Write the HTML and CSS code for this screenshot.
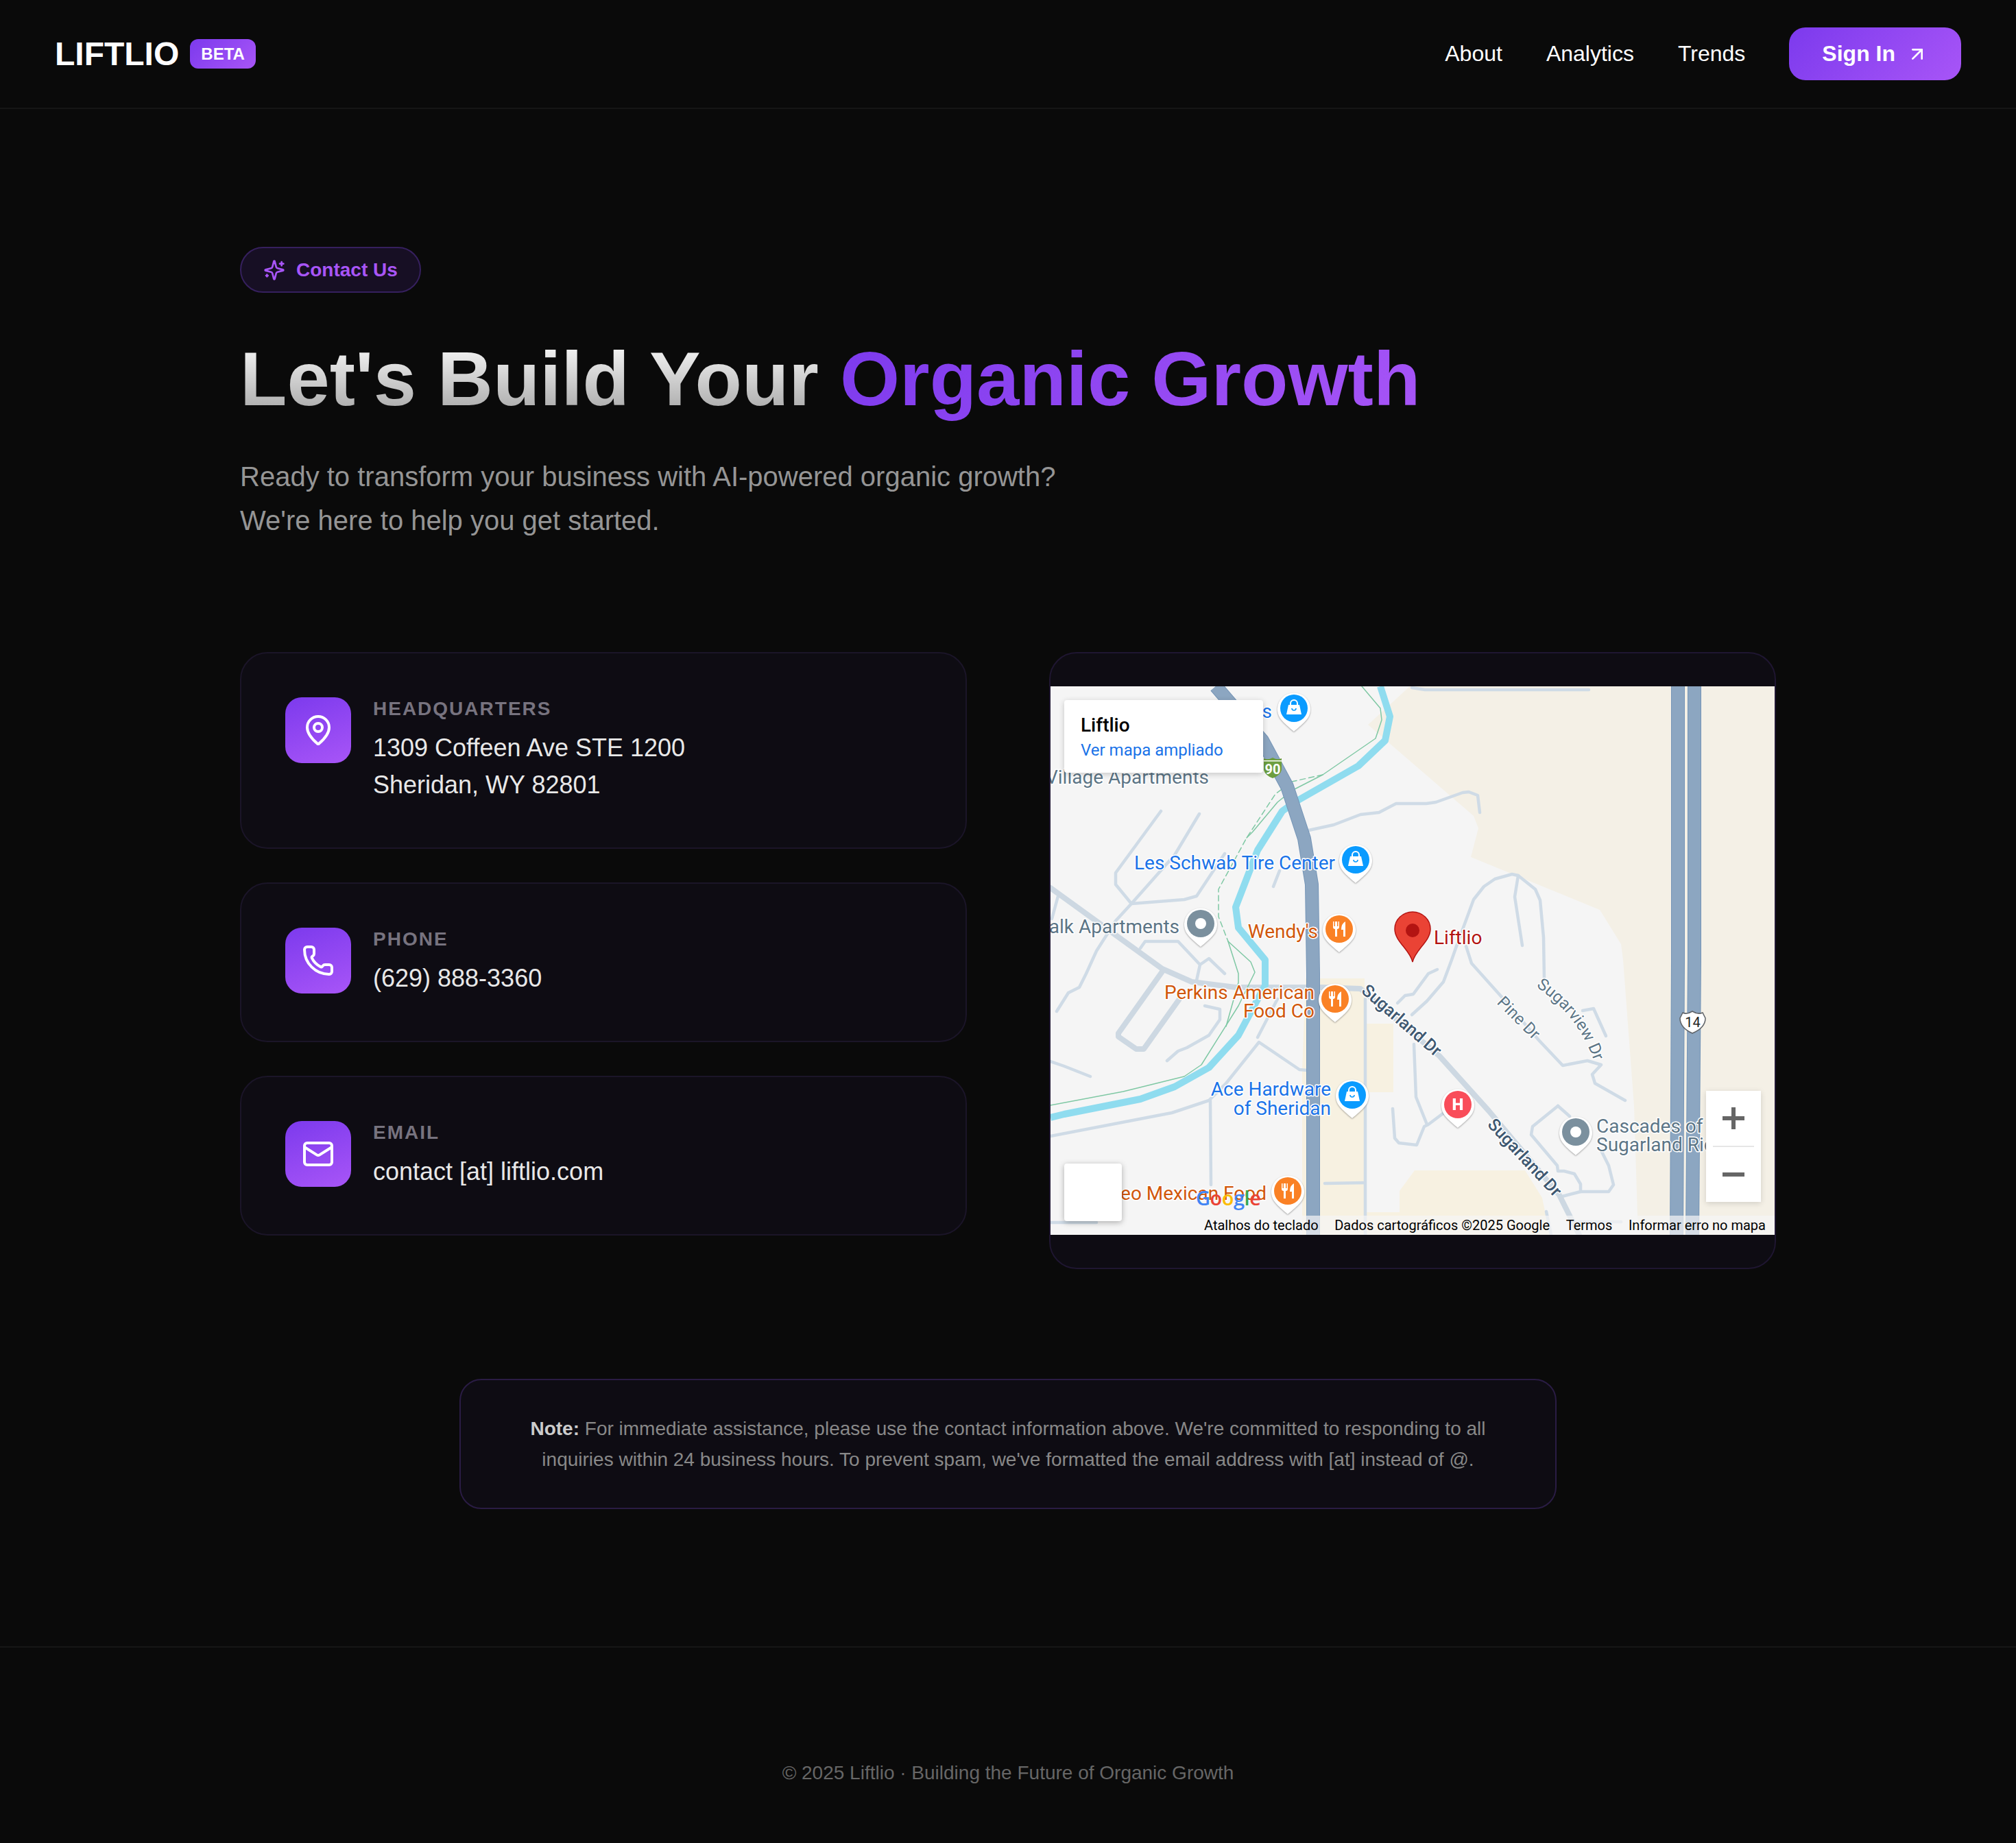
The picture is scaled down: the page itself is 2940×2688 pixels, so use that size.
FILE: index.html
```html
<!DOCTYPE html>
<html lang="en">
<head>
<meta charset="utf-8">
<title>Contact Us - Liftlio</title>
<link rel="stylesheet" href="styles.css">
</head>
<body>
<header class="site-header">
  <div class="brand">
    <span class="logo">LIFTLIO</span>
    <span class="beta">BETA</span>
  </div>
  <nav class="nav">
    <a class="nav-link">About</a>
    <a class="nav-link">Analytics</a>
    <a class="nav-link">Trends</a>
    <a class="sign-in">Sign In
      <svg class="icon-32" viewBox="0 0 24 24" fill="none" stroke="currentColor" stroke-width="2" stroke-linecap="round" stroke-linejoin="round"><path d="M7 7h10v10"/><path d="M7 17 17 7"/></svg>
    </a>
  </nav>
</header>

<main class="container">
  <section class="hero">
    <div class="pill">
      <svg class="icon-32" viewBox="0 0 24 24" fill="none" stroke="currentColor" stroke-width="2" stroke-linecap="round" stroke-linejoin="round"><path d="M9.937 15.5A2 2 0 0 0 8.5 14.063l-6.135-1.582a.5.5 0 0 1 0-.962L8.5 9.936A2 2 0 0 0 9.937 8.5l1.582-6.135a.5.5 0 0 1 .963 0L14.063 8.5A2 2 0 0 0 15.5 9.937l6.135 1.581a.5.5 0 0 1 0 .964L15.5 14.063a2 2 0 0 0-1.437 1.437l-1.582 6.135a.5.5 0 0 1-.963 0z"/><path d="M20 3v4"/><path d="M22 5h-4"/><path d="M4 17v2"/><path d="M5 18H3"/></svg>
      <span>Contact Us</span>
    </div>
    <h1 class="title"><span class="title-light">Let's Build Your </span><span class="title-accent">Organic Growth</span></h1>
    <p class="lead">Ready to transform your business with AI-powered organic growth?<br>We're here to help you get started.</p>
  </section>

  <section class="contact-grid">
    <div class="info-column">
      <article class="card">
        <div class="card-icon"><svg class="icon-48" viewBox="0 0 24 24" fill="none" stroke="currentColor" stroke-width="2" stroke-linecap="round" stroke-linejoin="round"><path d="M20 10c0 4.993-5.539 10.193-7.399 11.799a1 1 0 0 1-1.202 0C9.539 20.193 4 14.993 4 10a8 8 0 0 1 16 0"/><circle cx="12" cy="10" r="3"/></svg></div>
        <div class="card-body">
          <div class="card-label">HEADQUARTERS</div>
          <div class="card-value">1309 Coffeen Ave STE 1200<br>Sheridan, WY 82801</div>
        </div>
      </article>
      <article class="card">
        <div class="card-icon"><svg class="icon-48" viewBox="0 0 24 24" fill="none" stroke="currentColor" stroke-width="2" stroke-linecap="round" stroke-linejoin="round"><path d="M13.832 16.568a1 1 0 0 0 1.213-.303l.355-.465A2 2 0 0 1 17 15h3a2 2 0 0 1 2 2v3a2 2 0 0 1-2 2A18 18 0 0 1 2 4a2 2 0 0 1 2-2h3a2 2 0 0 1 2 2v3a2 2 0 0 1-.8 1.6l-.468.351a1 1 0 0 0-.292 1.233 14 14 0 0 0 6.392 6.384"/></svg></div>
        <div class="card-body">
          <div class="card-label">PHONE</div>
          <div class="card-value">(629) 888-3360</div>
        </div>
      </article>
      <article class="card">
        <div class="card-icon"><svg class="icon-48" viewBox="0 0 24 24" fill="none" stroke="currentColor" stroke-width="2" stroke-linecap="round" stroke-linejoin="round"><rect width="20" height="16" x="2" y="4" rx="2"/><path d="m22 7-8.97 5.7a1.94 1.94 0 0 1-2.06 0L2 7"/></svg></div>
        <div class="card-body">
          <div class="card-label">EMAIL</div>
          <div class="card-value">contact [at] liftlio.com</div>
        </div>
      </article>
    </div>

    <div class="map-card">
      <div class="map">
        <svg class="map-canvas" viewBox="0 0 1056 800" xmlns="http://www.w3.org/2000/svg">
          <defs>
            <g id="pin-shape">
              <path d="M0 34 C-3 31 -18 20 -22 11 A24 24 0 1 1 22 11 C18 20 3 31 0 34 Z" fill="#fff"/>
            </g>
            <g id="bag">
              <path d="M-11 9 L-8 -5 H8 L11 9 Z" fill="#fff"/>
              <path d="M-5 -5 V-7 A5 5 0 0 1 5 -7 V-5" fill="none" stroke="#fff" stroke-width="2"/>
              <path d="M-3 0 A3 3 0 0 0 3 0" fill="none" stroke="#0a9bff" stroke-width="1.6"/>
            </g>
            <g id="fork">
              <path d="M-9 -11 V-3 Q-9 0 -6 0 V11 H-3 V0 Q0 0 0 -3 V-11 H-1.5 V-4 H-3 V-11 H-6 V-4 H-7.5 V-11 Z" fill="#fff"/>
              <path d="M9 -11 Q3 -8 3 1 H6 V11 H9 Z" fill="#fff"/>
            </g>
            <path id="sugarview-path" d="M708 438 C740 460 775 492 796 556"/>
          </defs>

          <rect width="1056" height="800" fill="#f5f5f5"/>
          <path class="land" d="M524 0H1056V800H860L856 772 851 612 835 399 832 376 801 326 613 249 624 207 617 189 463 56Z"/>
          <path class="mall" d="M372 426H458V492H500V592H459V800H367V560Z"/>
          <path class="mall" d="M531 706H692L717 746 728 800H367V767H509V736Z"/>

          <g class="road">
            <path d="M161 182 95 272V289L118 317 195 311 213 306 254 244"/>
            <path d="M217 186 181 246 118 317 95 342 67 386 52 419 42 439 26 447 9 474"/>
            <path d="M11 306 2 339"/>
            <path d="M131 382 138 372H186L218 406 231 397 254 419M218 406 213 429"/>
            <path d="M372 211 413 202 452 187 479 184 504 171H548L562 169 601 155 610 154 623 159 626 184"/>
            <path d="M527 2 546 5H785"/>
            <path d="M334 269 325 292"/>
            <path d="M225 466 247 471V486L231 509 199 527 186 532 170 546"/>
            <path d="M0 547 20 554 58 569"/>
            <path d="M302 512 331 456"/>
            <path d="M0 656 177 622 231 604 256 579 304 519 363 559 374 560"/>
            <path d="M233 604 234 727"/>
            <path d="M459 456V800"/>
            <path d="M400 725 458 724"/>
            <path d="M0 782H67"/>
            <path d="M499 616 502 659 508 666 534 669 545 642 551 639 571 624 594 610"/>
            <path d="M530 522 533 599 549 639"/>
            <path d="M506 462 517 451 529 449 551 419 564 413"/>
            <path d="M592 379 585 399 573 431 549 459 527 479"/>
            <path d="M592 379 617 311 632 292 648 281 673 274 682 276 707 296 714 312 719 366 720 426"/>
            <path d="M682 276 677 307 688 378"/>
            <path d="M606 379 614 404 657 452 712 516 747 553 783 546 803 552 790 566 794 579 838 604"/>
            <path d="M776 473 792 470 810 510"/>
            <path d="M740 612 703 642 701 654 739 699 740 707H749L764 711 773 726V737H814L821 727 814 699 803 677"/>
            <path d="M740 612 757 627"/>
            <path d="M746 744 773 737"/>
            <path d="M723 766 730 800"/>
            <path d="M760 781H832"/>
          </g>
          <g class="road road-wide">
            <path d="M0 294 163 412 206 431 270 439H395L452 441 567 539 639 619 742 742 771 800"/>
            <path d="M163 416 99 506V511L125 529H136L188 456"/>
          </g>

          <path class="stream" d="M481 0 495 44 488 79 449 116 356 169 338 182 302 239 270 322 274 352 313 399V436L274 509 231 556 181 584 131 602 20 624 0 629"/>
          <path class="trail" d="M454 0 481 32 483 49 474 76 397 129 352 152 331 169 295 212 286 221"/>
          <path class="trail trail-dash" d="M397 129 352 139 328 157 286 221 245 296V336L259 372"/>
          <path class="trail" d="M259 372 292 402 298 417 274 466 220 552 195 569 106 591 0 611"/>
          <path class="trail" d="M259 372 274 419V432L256 496"/>

          <g class="highway-edge">
            <path d="M241 0 309 79 345 146 370 222 381 289 383 419V800"/>
            <path d="M915 0V400L913 800"/>
            <path d="M939 0V400L936 800"/>
          </g>
          <g class="highway">
            <path d="M241 0 309 79 345 146 370 222 381 289 383 419V800"/>
            <path d="M915 0V400L913 800"/>
            <path d="M939 0V400L936 800"/>
          </g>

          <g transform="translate(311 104)">
            <path d="M0 1 Q6 4 13 0 Q20 4 26 1 V18 Q24 26 13 30 Q2 26 0 18 Z" fill="#6d9e3f"/>
            <rect x="0" y="4" width="26" height="1.500" fill="#fff"/>
            <text class="shield-green" x="13" y="24">90</text>
          </g>
          <g transform="translate(918 474)">
            <path d="M4 2 Q10 5 18 0 Q26 5 33 2 L37 10 Q37 24 18 32 Q0 24 0 10 Z" fill="#fff" stroke="#5f6368" stroke-width="1.5"/>
            <text class="shield-white" x="18.500" y="23">14</text>
          </g>

          <g class="label">
            <text class="lb-blue" x="323" y="46" text-anchor="end">s</text>
            <text class="lb-grey" x="231" y="142" text-anchor="end">Village Apartments</text>
            <text class="lb-blue" x="415" y="267" text-anchor="end">Les Schwab Tire Center</text>
            <text class="lb-grey" x="188" y="360" text-anchor="end">alk Apartments</text>
            <text class="lb-orange" x="390" y="367" text-anchor="end">Wendy's</text>
            <text class="lb-orange" x="385" y="456" text-anchor="end">Perkins American</text>
            <text class="lb-orange" x="385" y="483" text-anchor="end">Food Co</text>
            <text class="lb-blue" x="409" y="597" text-anchor="end">Ace Hardware</text>
            <text class="lb-blue" x="409" y="625" text-anchor="end">of Sheridan</text>
            <text class="lb-orange" x="315" y="749" text-anchor="end">eo Mexican Food</text>
            <text class="lb-grey" x="796" y="651">Cascades of</text>
            <text class="lb-grey" x="796" y="678">Sugarland Ridge</text>
            <text class="lb-red" x="559" y="376">Liftlio</text>
            <text class="lb-street" transform="translate(452 446) rotate(41)">Sugarland Dr</text>
            <text class="lb-street" transform="translate(636 640) rotate(47)">Sugarland Dr</text>
            <text class="lb-lane" transform="translate(650 462) rotate(45)">Pine Dr</text>
            <text class="lb-lane"><textPath href="#sugarview-path">Sugarview Dr</textPath></text>
          </g>

          <g class="pin" transform="translate(355 32)"><use href="#pin-shape"/><circle r="20" fill="#0a9bff"/><use href="#bag"/></g>
          <g class="pin" transform="translate(445 253)"><use href="#pin-shape"/><circle r="20" fill="#0a9bff"/><use href="#bag"/></g>
          <g class="pin" transform="translate(440 596)"><use href="#pin-shape"/><circle r="20" fill="#0a9bff"/><use href="#bag"/></g>
          <g class="pin" transform="translate(219 346)"><use href="#pin-shape"/><circle r="20" fill="#7b909e"/><circle r="8" fill="#fff"/></g>
          <g class="pin" transform="translate(766 650)"><use href="#pin-shape"/><circle r="20" fill="#7b909e"/><circle r="8" fill="#fff"/></g>
          <g class="pin" transform="translate(421 354)"><use href="#pin-shape"/><circle r="20" fill="#fa8125"/><use href="#fork"/></g>
          <g class="pin" transform="translate(415 456)"><use href="#pin-shape"/><circle r="20" fill="#fa8125"/><use href="#fork"/></g>
          <g class="pin" transform="translate(346 736)"><use href="#pin-shape"/><circle r="20" fill="#fa8125"/><use href="#fork"/></g>
          <g class="pin" transform="translate(594 610)"><use href="#pin-shape"/><circle r="20" fill="#f94d5a"/><text class="hospital" y="8">H</text></g>

          <path d="M528 402 C524 384 502 372 502 354 A26 25 0 0 1 554 354 C554 372 532 384 528 402Z" fill="#ea4335" stroke="#b31412" stroke-width="1.500"/>
          <circle cx="528" cy="356" r="10" fill="#b31412"/>

          <text class="google" x="212" y="757"><tspan fill="#4285f4">G</tspan><tspan fill="#ea4335">o</tspan><tspan fill="#fbbc05">o</tspan><tspan fill="#4285f4">g</tspan><tspan fill="#34a853">l</tspan><tspan fill="#ea4335">e</tspan></text>
        </svg>

        <div class="info-window">
          <div class="info-title">Liftlio</div>
          <div class="info-link">Ver mapa ampliado</div>
        </div>
        <div class="map-tile"></div>
        <div class="zoom-control">
          <svg class="zoom-glyph" viewBox="0 0 80 80"><path d="M24 40H56M40 24V56"/></svg>
          <span class="zoom-sep"></span>
          <svg class="zoom-glyph" viewBox="0 0 80 80"><path d="M24 40H56"/></svg>
        </div>
        <div class="attribution">
          <span class="attr-item">Atalhos do teclado</span>
          <span class="attr-item">Dados cartográficos ©2025 Google</span>
          <span class="attr-item">Termos</span>
          <span class="attr-item">Informar erro no mapa</span>
        </div>
      </div>
    </div>
  </section>

  <aside class="note"><p><strong>Note:</strong> For immediate assistance, please use the contact information above. We're committed to responding to all inquiries within 24 business hours. To prevent spam, we've formatted the email address with [at] instead of @.</p></aside>
</main>

<footer class="site-footer">© 2025 Liftlio · Building the Future of Organic Growth</footer>
</body>
</html>
```

FILE: styles.css
```css
* { box-sizing: border-box; margin: 0; padding: 0; }

body {
  background: #0a0a0a;
  color: #fff;
  font-family: "Liberation Sans", Arial, sans-serif;
}

.site-header {
  display: flex;
  align-items: center;
  justify-content: space-between;
  padding: 40px 80px;
  border-bottom: 2px solid #161616;
}

.brand { display: flex; align-items: center; gap: 16px; }

.logo {
  font-size: 48px;
  font-weight: 700;
  line-height: 56px;
}

.beta {
  background: linear-gradient(135deg, #7c3aed, #a855f7);
  border-radius: 12px;
  color: #fff;
  font-size: 24px;
  font-weight: 700;
  line-height: 27px;
  padding: 8px 16px;
}

.nav { display: flex; align-items: center; gap: 64px; }

.nav-link { font-size: 32px; color: #fff; }

.sign-in {
  display: flex;
  align-items: center;
  gap: 16px;
  padding: 20px 48px;
  border-radius: 24px;
  background: linear-gradient(135deg, #7c3aed, #a855f7);
  color: #fff;
  font-size: 32px;
  font-weight: 700;
}

.icon-32 { width: 32px; height: 32px; flex: none; }
.icon-48 { width: 48px; height: 48px; flex: none; }

.container {
  width: 2240px;
  margin: 0 auto;
  padding: 201px 0 200px;
}

.pill {
  display: inline-flex;
  align-items: center;
  gap: 16px;
  padding: 15.5px 32px;
  background: #170f24;
  border: 2px solid #36205e;
  border-radius: 100px;
  color: #a855f7;
  font-size: 28px;
  font-weight: 700;
}

.title {
  margin-top: 59px;
  font-size: 112px;
  font-weight: 700;
  line-height: 134px;
}

.title-light {
  background: linear-gradient(180deg, #fff, #a0a0a0);
  -webkit-background-clip: text;
  background-clip: text;
  color: transparent;
}

.title-accent {
  background: linear-gradient(135deg, #7c3aed, #a855f7);
  -webkit-background-clip: text;
  background-clip: text;
  color: transparent;
}

.lead {
  margin-top: 43px;
  font-size: 40px;
  line-height: 64px;
  color: #959595;
}

.contact-grid {
  display: grid;
  grid-template-columns: 1060px 1060px;
  gap: 120px;
  margin-top: 160px;
  align-items: start;
}

.info-column { display: flex; flex-direction: column; gap: 49px; }

.card {
  display: flex;
  gap: 32px;
  padding: 64px;
  background: #0e0c13;
  border: 2px solid #1b1528;
  border-radius: 40px;
}

.card-icon {
  display: flex;
  align-items: center;
  justify-content: center;
  flex: none;
  width: 96px;
  height: 96px;
  border-radius: 24px;
  background: linear-gradient(160deg, #7c3aed, #a855f7);
  color: #fff;
}

.card-label {
  margin-bottom: 13px;
  color: #77737f;
  font-size: 28px;
  font-weight: 700;
  letter-spacing: 2px;
  line-height: 34px;
}

.card-value {
  color: #e8e8e8;
  font-size: 36px;
  line-height: 54px;
}

.map-card {
  padding: 48px 0;
  background: #0e0c13;
  border: 2px solid #1f1631;
  border-radius: 40px;
  overflow: hidden;
}

.map {
  position: relative;
  width: 1056px;
  height: 800px;
  overflow: hidden;
  font-family: Roboto, "Liberation Sans", sans-serif;
}

.map-canvas { display: block; width: 1056px; height: 800px; }

.land { fill: #f4f0e6; }
.mall { fill: #f7f1e1; }

.road, .stream, .trail, .highway, .highway-edge { fill: none; stroke-linejoin: round; stroke-linecap: round; }
.road { stroke: #cfdbe6; stroke-width: 4.5; }
.road-wide { stroke: #cdd8e2; stroke-width: 8; }
.stream { stroke: #8fdcef; stroke-width: 10; stroke-linecap: butt; }
.trail { stroke: #7fc8a4; stroke-width: 1.5; }
.trail-dash { stroke-dasharray: 8 5; }
.highway-edge { stroke: #7595b7; stroke-width: 20; stroke-linecap: butt; }
.highway { stroke: #8ca6c1; stroke-width: 18; stroke-linecap: butt; }

.label text {
  font-family: Roboto, sans-serif;
  font-size: 28px;
  paint-order: stroke;
  stroke: #fff;
  stroke-width: 3px;
  stroke-linejoin: round;
}
.label .lb-blue { fill: #1a73e8; }
.label .lb-grey { fill: #5c7586; }
.label .lb-orange { fill: #d1570b; }
.label .lb-red { fill: #b31412; }
.label .lb-street { fill: #3e5871; font-size: 25px; font-weight: 500; }
.label .lb-lane { fill: #5c7586; font-size: 24px; }

.pin { filter: drop-shadow(0 1px 1px rgba(0, 0, 0, 0.35)); }

.shield-green { fill: #fff; font-family: Roboto, sans-serif; font-size: 20px; font-weight: 700; text-anchor: middle; }
.shield-white { fill: #222; font-family: Roboto, sans-serif; font-size: 20px; text-anchor: middle; }
.hospital { fill: #fff; font-family: Roboto, sans-serif; font-size: 24px; font-weight: 900; text-anchor: middle; }
.google { font-family: "Open Sans", sans-serif; font-size: 29px; font-weight: 600; letter-spacing: -0.5px; }

.info-window {
  position: absolute;
  top: 20px;
  left: 20px;
  width: 290px;
  height: 106px;
  padding: 19px 24px;
  background: #fff;
  border-radius: 4px;
  box-shadow: 0 2px 8px rgba(0, 0, 0, 0.2);
}

.info-title { color: #000; font-size: 28px; font-weight: 500; line-height: 36px; }
.info-link { color: #1a73e8; font-size: 24px; line-height: 32px; margin-top: 2px; }

.map-tile {
  position: absolute;
  left: 20px;
  top: 696px;
  width: 84px;
  height: 84px;
  background: #fff;
  border-radius: 4px;
  box-shadow: 0 2px 8px rgba(0, 0, 0, 0.3);
}

.zoom-control {
  position: absolute;
  left: 956px;
  top: 590px;
  display: flex;
  flex-direction: column;
  align-items: center;
  width: 80px;
  height: 162px;
  background: #fff;
  box-shadow: 0 2px 8px rgba(0, 0, 0, 0.15);
}

.zoom-glyph { display: block; width: 80px; height: 80px; fill: none; stroke: #666; stroke-width: 6; }
.zoom-sep { display: block; width: 60px; height: 2px; background: #e6e6e6; }

.attribution {
  position: absolute;
  left: 210px;
  right: 0;
  bottom: 0;
  display: flex;
  height: 28px;
  padding: 0 13px 0 14px;
  justify-content: space-between;
  align-items: center;
  background: rgba(245, 245, 245, 0.7);
  color: #000;
  font-size: 20px;
}

.note {
  width: 1600px;
  margin: 160px auto 0;
  padding: 48px 80px;
  background: #0e0c13;
  border: 2px solid #2a1c44;
  border-radius: 32px;
  color: #888;
  font-size: 28px;
  line-height: 45px;
  text-align: center;
}

.note strong { color: #ccc; font-weight: 700; }

.site-footer {
  padding: 160px 0 80px;
  border-top: 2px solid #161616;
  color: #666;
  font-size: 28px;
  line-height: 45px;
  text-align: center;
}
```
